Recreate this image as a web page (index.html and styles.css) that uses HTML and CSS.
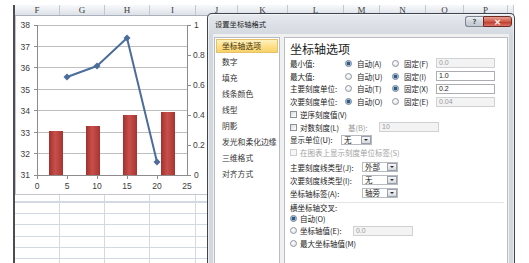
FILE: index.html
```html
<!DOCTYPE html>
<html lang="zh-CN">
<head>
<meta charset="utf-8">
<title>设置坐标轴格式</title>
<link rel="stylesheet" href="styles.css">
</head>
<body>
<div class="screen">
  <div class="sheet">
    <div class="colheads">
      <span class="ch">F</span><span class="ch">G</span><span class="ch">H</span><span class="ch">I</span><span class="ch">J</span><span class="ch">K</span><span class="ch">L</span><span class="ch">M</span><span class="ch">N</span><span class="ch">O</span><span class="ch">P</span><span class="ch"></span>
    </div>
    <div class="chartrow">
      <svg class="chart" width="200" height="179" viewBox="0 0 200 179">
        <defs>
          <linearGradient id="bar" x1="0" y1="0" x2="1" y2="0">
            <stop offset="0" stop-color="#a3302d"/>
            <stop offset="0.45" stop-color="#c8504c"/>
            <stop offset="1" stop-color="#a7332f"/>
          </linearGradient>
        </defs>
        <rect x="0.5" y="-1" width="199" height="179.5" fill="#fff" stroke="#c3c7cd"/>
        <g stroke="#bfbfbf" stroke-width="1">
          <line x1="22" x2="172" y1="9.5" y2="9.5"/>
          <line x1="22" x2="172" y1="30.5" y2="30.5"/>
          <line x1="22" x2="172" y1="51.5" y2="51.5"/>
          <line x1="22" x2="172" y1="73.5" y2="73.5"/>
          <line x1="22" x2="172" y1="94.5" y2="94.5"/>
          <line x1="22" x2="172" y1="116.5" y2="116.5"/>
          <line x1="22" x2="172" y1="137.5" y2="137.5"/>
        </g>
        <g stroke="#8c8c8c" stroke-width="1">
          <line x1="22.5" x2="22.5" y1="9" y2="160"/>
          <line x1="19" x2="22" y1="9.5" y2="9.5"/>
          <line x1="19" x2="22" y1="30.5" y2="30.5"/>
          <line x1="19" x2="22" y1="51.5" y2="51.5"/>
          <line x1="19" x2="22" y1="73.5" y2="73.5"/>
          <line x1="19" x2="22" y1="94.5" y2="94.5"/>
          <line x1="19" x2="22" y1="116.5" y2="116.5"/>
          <line x1="19" x2="22" y1="137.5" y2="137.5"/>
          <line x1="19" x2="176" y1="159.5" y2="159.5"/>
          <line x1="172.5" x2="172.5" y1="9" y2="160"/>
          <line x1="172" x2="176" y1="9.5" y2="9.5"/>
          <line x1="172" x2="176" y1="39.5" y2="39.5"/>
          <line x1="172" x2="176" y1="69.5" y2="69.5"/>
          <line x1="172" x2="176" y1="99.5" y2="99.5"/>
          <line x1="172" x2="176" y1="129.5" y2="129.5"/>
          <line x1="52.5" x2="52.5" y1="160" y2="163"/>
          <line x1="82.5" x2="82.5" y1="160" y2="163"/>
          <line x1="112.5" x2="112.5" y1="160" y2="163"/>
          <line x1="142.5" x2="142.5" y1="160" y2="163"/>
          <line x1="22.5" x2="22.5" y1="160" y2="163"/>
        </g>
        <g fill="url(#bar)">
          <rect x="34" y="115" width="14" height="44"/>
          <rect x="71" y="110" width="14" height="49"/>
          <rect x="108" y="99" width="14" height="60"/>
          <rect x="146" y="96" width="14" height="63"/>
        </g>
        <polyline points="52,61 82,50 112,22 142,146" fill="none" stroke="#4a6d9c" stroke-width="2" stroke-linejoin="round"/>
        <g fill="#4a6d9c">
          <polygon points="52,57.5 55.5,61 52,64.5 48.5,61"/>
          <polygon points="82,46.5 85.5,50 82,53.5 78.5,50"/>
          <polygon points="112,18.5 115.5,22 112,25.5 108.5,22"/>
          <polygon points="142,142.5 145.5,146 142,149.5 138.5,146"/>
        </g>
        <g class="ax" text-anchor="end">
          <text x="15" y="12">38</text>
          <text x="15" y="33.5">37</text>
          <text x="15" y="55">36</text>
          <text x="15" y="76.5">35</text>
          <text x="15" y="98">34</text>
          <text x="15" y="119.5">33</text>
          <text x="15" y="141">32</text>
          <text x="15" y="162">31</text>
        </g>
        <g class="ax" text-anchor="start">
          <text x="179" y="12">1</text>
          <text x="178" y="42">0.8</text>
          <text x="178" y="72">0.6</text>
          <text x="178" y="102">0.4</text>
          <text x="178" y="132">0.2</text>
          <text x="179" y="162">0</text>
        </g>
        <g class="ax" text-anchor="middle">
          <text x="22" y="173">0</text>
          <text x="52" y="173">5</text>
          <text x="82" y="173">10</text>
          <text x="112" y="173">15</text>
          <text x="142" y="173">20</text>
          <text x="172" y="173">25</text>
        </g>
      </svg>
    </div>
    <div class="cells">
      <span></span><span></span><span></span><span></span><span></span><span></span><span></span><span></span><span></span><span></span><span></span><span></span>
    </div>
  </div>

  <div class="dialog">
    <div class="titlebar">
      <span class="title">设置坐标轴格式</span>
      <div class="caps">
        <span class="cap help">?</span>
        <span class="cap close">×</span>
      </div>
    </div>
    <div class="client">
      <ul class="nav">
        <li class="on">坐标轴选项</li>
        <li>数字</li>
        <li>填充</li>
        <li>线条颜色</li>
        <li>线型</li>
        <li>阴影</li>
        <li>发光和柔化边缘</li>
        <li>三维格式</li>
        <li>对齐方式</li>
      </ul>
      <div class="panel">
        <div class="heading">坐标轴选项</div>
        <div class="optgrid">
          <span class="lbl">最小值:</span>
          <span class="opt"><i class="radio on"></i>自动(A)</span>
          <span class="opt"><i class="radio"></i>固定(F)</span>
          <span class="field dis">0.0</span>

          <span class="lbl">最大值:</span>
          <span class="opt"><i class="radio"></i>自动(U)</span>
          <span class="opt"><i class="radio on"></i>固定(I)</span>
          <span class="field">1.0</span>

          <span class="lbl">主要刻度单位:</span>
          <span class="opt"><i class="radio"></i>自动(T)</span>
          <span class="opt"><i class="radio on"></i>固定(X)</span>
          <span class="field">0.2</span>

          <span class="lbl">次要刻度单位:</span>
          <span class="opt"><i class="radio on"></i>自动(O)</span>
          <span class="opt"><i class="radio"></i>固定(E)</span>
          <span class="field dis">0.04</span>
        </div>

        <div class="checks">
          <div class="row"><i class="check"></i>逆序刻度值(V)</div>
          <div class="row">
            <span class="logl"><i class="check"></i>对数刻度(L)</span>
            <span class="base">基(B):</span>
            <span class="field dis wide">10</span>
          </div>
          <div class="row">
            <span class="unitl">显示单位(U):</span>
            <span class="combo unit"><span class="val">无</span><span class="btn"></span></span>
          </div>
          <div class="row muted"><i class="check dis"></i>在图表上显示刻度单位标签(S)</div>
        </div>

        <div class="ticks">
          <div class="row">
            <span class="tickl">主要刻度线类型(J):</span>
            <span class="combo tick"><span class="val">外部</span><span class="btn"></span></span>
          </div>
          <div class="row">
            <span class="tickl">次要刻度线类型(I):</span>
            <span class="combo tick"><span class="val">无</span><span class="btn"></span></span>
          </div>
          <div class="row">
            <span class="tickl">坐标轴标签(A):</span>
            <span class="combo tick"><span class="val">轴旁</span><span class="btn"></span></span>
          </div>
        </div>

        <div class="cross">
          <div class="crossl">横坐标轴交叉:</div>
          <div class="row r2"><i class="radio on"></i>自动(O)</div>
          <div class="row r2">
            <span class="valuel"><i class="radio"></i>坐标轴值(E):</span>
            <span class="field dis wide">0.0</span>
          </div>
          <div class="row r2"><i class="radio"></i>最大坐标轴值(M)</div>
        </div>
      </div>
    </div>
  </div>
</div>
</body>
</html>
```

FILE: styles.css
```css
* { box-sizing: border-box; margin: 0; padding: 0; }
html, body { width: 529px; height: 263px; overflow: hidden; background: #fff; }
body { font-family: "Noto Sans CJK SC", "Noto Sans", sans-serif; color: #222; }

.screen { position: relative; width: 529px; height: 263px; overflow: hidden; background: #fff; }

/* spreadsheet */
.sheet {
  margin: 5px 0 0 13px;
  width: 501px;
  height: 258px;
  border-left: 2px solid #4a4d52;
  display: flex;
  flex-direction: column;
  background: #fff;
}
.colheads, .cells {
  display: grid;
  grid-template-columns: 45px 45px 45px 46px 42px 50px 56px 36px 46px 38px 44px 6px;
}
.colheads {
  height: 11px;
  flex: none;
  background: linear-gradient(#f8f9fb, #dde2e8);
  border-bottom: 1px solid #a9b1bc;
}
.ch {
  border-right: 1px solid #c2c8d0;
  font-family: "Liberation Serif", serif;
  font-size: 9px;
  line-height: 10px;
  text-align: center;
  color: #3a3a3a;
}
.chartrow { height: 179px; flex: none; }
.chart { display: block; }
.ax { font-family: "Liberation Sans", sans-serif; font-size: 8.5px; fill: #3c3c3c; }

.cells {
  flex: 1;
  background: repeating-linear-gradient(to bottom, #d3d9e2 0 1px, transparent 1px 11.2px);
  background-position: 0 7px;
}
.cells span { border-right: 1px solid #d3d9e2; }

/* dialog window */
.dialog {
  position: absolute;
  left: 207px;
  top: 13px;
  width: 308px;
  height: 252px;
  border: 1px solid #3d4552;
  border-bottom: none;
  border-radius: 5px 5px 0 0;
  background: linear-gradient(#e6e9ee, #d3d8df 22px, #d3d8df);
  box-shadow: inset 0 0 0 1px rgba(255,255,255,0.55);
  padding: 0 5px;
  display: flex;
  flex-direction: column;
}
.titlebar { height: 20px; flex: none; display: flex; align-items: flex-start; margin-right: -3px; }
.title { font-size: 7.3px; line-height: 21px; padding-left: 2px; color: #1b1b1b; }
.caps { margin-left: auto; margin-top: 2px; display: flex; }
.cap {
  height: 11px;
  display: flex;
  align-items: center;
  justify-content: center;
  font-family: "DejaVu Sans", sans-serif;
}
.help {
  width: 18px;
  border: 1px solid #7c8491;
  border-right: none;
  border-radius: 3px 0 0 3px;
  background: linear-gradient(#eef0f3, #cdd2d9 55%, #c3c9d1);
  font-size: 7px;
  font-weight: bold;
  color: #4b5563;
}
.close {
  width: 29px;
  border: 1px solid #6d2a22;
  border-radius: 0 3px 3px 0;
  background: linear-gradient(#e7a192, #cf5a4a 50%, #c0392b 55%, #d9766a);
  font-size: 9px;
  font-weight: bold;
  color: #fff;
}

.client {
  flex: 1;
  background: #f0f0f0;
  display: flex;
  gap: 4px;
  padding: 3px 1px 0;
}

.nav {
  list-style: none;
  width: 66px;
  background: #fff;
  border: 1px solid #b9bcc2;
  border-bottom: none;
  padding-top: 1px;
  display: flex;
  flex-direction: column;
  gap: 2px;
}
.nav li {
  height: 14px;
  margin: 0 1px;
  padding-left: 5px;
  font-size: 7.8px;
  line-height: 12px;
  color: #333;
  white-space: nowrap;
  overflow: hidden;
  border: 1px solid transparent;
}
.nav li.on {
  background: linear-gradient(#fff2c0, #fde08a 50%, #f9d36a);
  border-color: #e4c16a;
  color: #3b2f12;
}

.panel {
  flex: 1;
  background: #fff;
  border: 1px solid #b9bcc2;
  border-bottom: none;
  padding-left: 5px;
  font-size: 7.5px;
  color: #1a1a1a;
}
.heading { margin-top: 3px; height: 16px; font-size: 12px; line-height: 16px; color: #1a1a1a; }

.optgrid {
  display: grid;
  grid-template-columns: 54px 47px 45px 59px;
  grid-auto-rows: 12.8px;
  align-items: center;
}
.lbl, .opt, .row, .logl, .valuel { display: flex; align-items: center; white-space: nowrap; }

.radio {
  display: inline-block;
  flex: none;
  width: 7px;
  height: 7px;
  margin: 0 5px 0 1px;
  border-radius: 50%;
  border: 1px solid #8f969f;
  background: radial-gradient(circle at 40% 35%, #ffffff, #dadde2);
}
.radio.on {
  border-color: #6f7f92;
  background: radial-gradient(circle, #2e5a86 0 1.4px, #8fb0cf 1.9px, #eef3f8 3px);
}
.check {
  display: inline-block;
  flex: none;
  width: 7px;
  height: 7px;
  margin-right: 3px;
  border: 1px solid #8e939a;
  background: linear-gradient(135deg, #d9dde2, #ffffff);
}
.check.dis { border-color: #cacdd1; background: #f6f6f6; }

.field {
  height: 10px;
  border: 1px solid #abadb3;
  background: #fff;
  padding-left: 2px;
  font-family: "Liberation Sans", sans-serif;
  font-size: 7px;
  line-height: 8px;
  color: #222;
}
.field.dis { background: #f3f3f3; border-color: #cfd1d5; color: #9c9c9c; }
.field.wide { width: 60px; }

.checks { margin-top: 0.3px; }
.checks .row { height: 12.6px; }
.logl { width: 58px; }
.base { width: 31px; color: #9a9a9a; }
.unitl { width: 51px; }
.muted { color: #a3a3a3; }

.combo {
  display: flex;
  align-items: center;
  height: 10px;
  border: 1px solid #b7bbc1;
  background: #fff;
}
.combo .val { flex: 1; padding-left: 2px; line-height: 8px; }
.combo .btn {
  width: 10px;
  height: 8px;
  border: 1px solid #9aa1aa;
  background: linear-gradient(#f6f7f9, #d6dae0);
  display: flex;
  align-items: center;
  justify-content: center;
}
.combo .btn::after {
  content: "";
  border-left: 2px solid transparent;
  border-right: 2px solid transparent;
  border-top: 2px solid #2c2c2c;
}
.combo.unit { width: 31px; }
.combo.tick { width: 36px; }

.ticks { margin-top: 2px; }
.ticks .row { height: 13px; }
.tickl { width: 72px; }

.cross { margin-top: 2px; margin-right: 3px; border-top: 1px solid #e2e4e7; }
.crossl { height: 9px; line-height: 9px; }
.cross .r2 { height: 12.5px; }
.valuel { width: 63px; }
.cross .radio { margin: 0 3px 0 0; }
```
